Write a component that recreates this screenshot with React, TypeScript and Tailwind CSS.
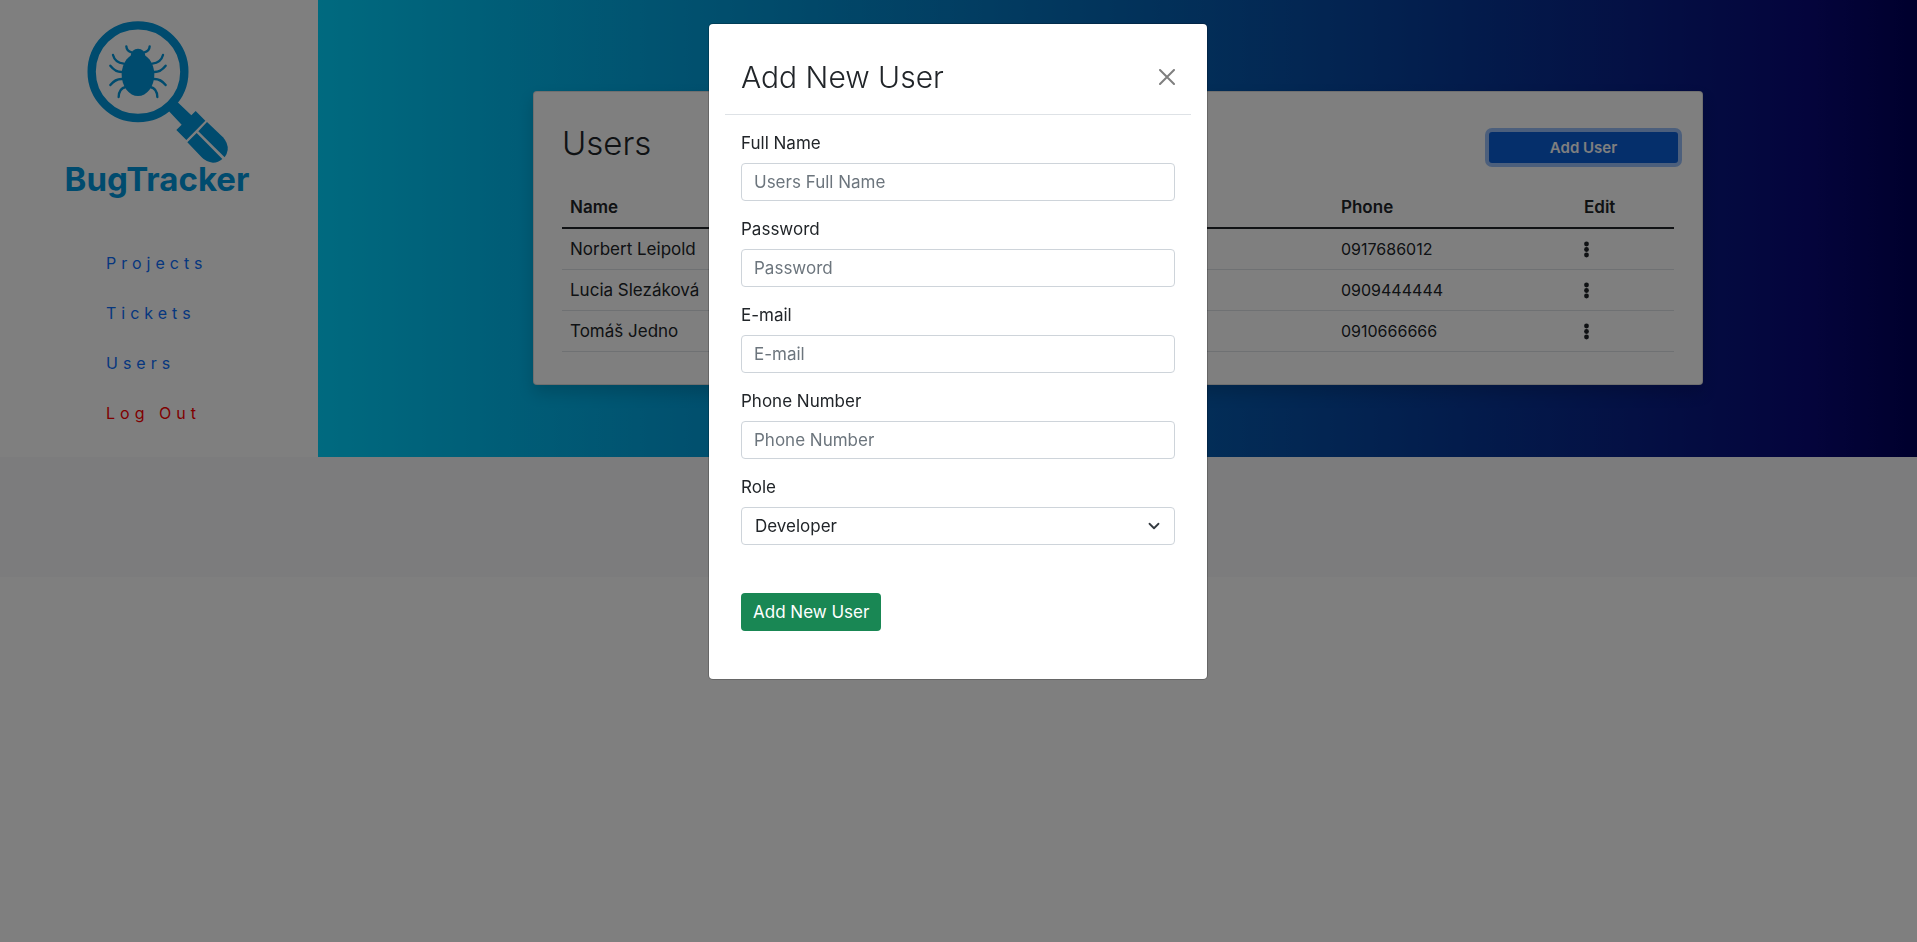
import type { ReactNode } from "react";

const users = [
  { name: "Norbert Leipold", phone: "0917686012" },
  { name: "Lucia Slezáková", phone: "0909444444" },
  { name: "Tomáš Jedno", phone: "0910666666" },
];

const fields = [
  { id: "full-name", label: "Full Name", placeholder: "Users Full Name", type: "text" },
  { id: "password", label: "Password", placeholder: "Password", type: "password" },
  { id: "email", label: "E-mail", placeholder: "E-mail", type: "email" },
  { id: "phone", label: "Phone Number", placeholder: "Phone Number", type: "tel" },
];

function Logo() {
  return (
    <div className="flex flex-col items-center pt-5 pr-0.5 text-[#0096dc]">
      <svg viewBox="100 60 450 432" className="h-36 w-[150px]" aria-hidden="true">
        <circle cx="265" cy="215" r="139" fill="none" stroke="currentColor" strokeWidth="25" />
        <ellipse cx="265" cy="224" rx="49" ry="64" fill="currentColor" />
        <path d="M243 178 V168 A22 22 0 0 1 287 168 V178 Z" fill="currentColor" />
        <g fill="none" stroke="currentColor" strokeWidth="7" strokeLinecap="round">
          <path d="M230 139 Q231 153 246 157" />
          <path d="M300 139 Q299 153 284 157" />
          <path d="M190 165 Q196 188 222 191" />
          <path d="M340 165 Q334 188 308 191" />
          <path d="M182 197 Q197 216 216 216" />
          <path d="M348 197 Q333 216 314 216" />
          <path d="M182 255 Q197 236 218 237" />
          <path d="M348 255 Q333 236 312 237" />
          <path d="M207 291 Q208 265 228 261" />
          <path d="M323 291 Q322 265 302 261" />
        </g>
        <g fill="currentColor">
          <path d="M358 334 L384 307 L425 346 L438 333 L467 362 L410 420 L380 390 L396 374 Z" />
          <path d="M472 366 L520 412 Q536 430 534 450 Q532 463 525 472 L446 394 Z" />
          <path d="M441 399 L518 477 Q506 488 490 488 Q470 487 456 472 L413 427 Z" />
        </g>
      </svg>
      <span className="pr-0.5 text-[33px] leading-[30px] font-bold">BugTracker</span>
    </div>
  );
}

function NavLink({ children, className }: { children: ReactNode; className: string }) {
  return (
    <li>
      <a href="#" className={`text-base leading-6 tracking-[5px] ${className}`}>
        {children}
      </a>
    </li>
  );
}

function Dots() {
  return (
    <svg viewBox="0 0 5 17" className="h-[17px] w-[5px]" fill="currentColor" aria-hidden="true">
      <circle cx="2.5" cy="3" r="2.4" />
      <circle cx="2.5" cy="8.5" r="2.4" />
      <circle cx="2.5" cy="14" r="2.4" />
    </svg>
  );
}

function UsersCard() {
  return (
    <section className="rounded border border-black/[0.125] bg-white px-7 pt-6 pb-8 shadow-[0_8px_16px_rgba(0,0,0,0.15)]">
      <div className="flex items-start justify-between pt-2">
        <h2 className="text-[33px] leading-[38px] font-light">Users</h2>
        <button
          type="button"
          className="-mr-1 mt-2 h-[31px] w-[189px] rounded-[3px] bg-[#0b5ed7] text-[15px] leading-5 font-semibold text-white ring-4 ring-[#98bff8]"
        >
          Add User
        </button>
      </div>
      <table className="mt-6 w-full table-fixed border-collapse text-left">
        <colgroup>
          <col />
          <col className="w-[243px]" />
          <col className="w-[98px]" />
        </colgroup>
        <thead>
          <tr className="border-b-2 border-[#212529]">
            <th className="p-2 text-[17px] leading-6 font-semibold">Name</th>
            <th className="p-2 text-[17px] leading-6 font-semibold">Phone</th>
            <th className="p-2 text-[17px] leading-6 font-semibold">Edit</th>
          </tr>
        </thead>
        <tbody>
          {users.map((user) => (
            <tr key={user.phone} className="border-b border-[#dee2e6]">
              <td className="p-2 text-[17px] leading-6">{user.name}</td>
              <td className="p-2">{user.phone}</td>
              <td className="p-2">
                <button type="button" aria-label={`Edit ${user.name}`} className="flex h-6 items-center">
                  <Dots />
                </button>
              </td>
            </tr>
          ))}
        </tbody>
      </table>
    </section>
  );
}

function AddUserDialog() {
  return (
    <div className="fixed inset-0 overflow-y-auto bg-black/50 pr-px text-[17px] leading-6">
      <div
        role="dialog"
        aria-modal="true"
        aria-labelledby="dialog-title"
        className="mx-auto mt-6 w-full max-w-[498px] rounded bg-white p-4 ring-1 ring-black/20"
      >
        <header className="flex items-center justify-between border-b border-[#dee2e6] px-4 py-5">
          <h1 id="dialog-title" className="text-[30px] leading-[34px] font-light">
            Add New User
          </h1>
          <button type="button" aria-label="Close" className="text-[#7f7f7f]">
            <svg viewBox="0 0 16 16" className="size-4" fill="none" stroke="currentColor" strokeWidth="2" strokeLinecap="round">
              <path d="M1 1 L15 15 M15 1 L1 15" />
            </svg>
          </button>
        </header>
        <form className="flex flex-col gap-4 px-4 pt-4 pb-8">
          {fields.map((field) => (
            <div key={field.id} className="flex flex-col gap-2">
              <label htmlFor={field.id}>{field.label}</label>
              <input
                id={field.id}
                type={field.type}
                placeholder={field.placeholder}
                className="h-[38px] w-full rounded border border-[#ced4da] bg-white px-3 placeholder:text-[#6c757d]"
              />
            </div>
          ))}
          <div className="flex flex-col gap-2">
            <label htmlFor="role">Role</label>
            <div className="grid items-center">
              <select
                id="role"
                className="col-start-1 row-start-1 h-[38px] w-full appearance-none rounded border border-[#ced4da] bg-white px-[13px]"
              >
                <option>Developer</option>
              </select>
              <svg
                viewBox="0 0 16 16"
                className="pointer-events-none col-start-1 row-start-1 mr-[13px] h-3 w-4 justify-self-end"
                fill="none"
                stroke="#343a40"
                strokeWidth="2.4"
                strokeLinecap="round"
                strokeLinejoin="round"
                aria-hidden="true"
              >
                <path d="M2 5 L8 11 L14 5" />
              </svg>
            </div>
          </div>
          <button type="submit" className="mt-8 h-[38px] self-start rounded bg-[#198754] px-3 text-white">
            Add New User
          </button>
        </form>
      </div>
    </div>
  );
}

export default function App() {
  return (
    <div className="min-h-screen bg-white font-['Inter',sans-serif] text-base text-[#212529]">
      <div className="flex">
        <aside className="w-[318px] shrink-0 bg-white">
          <Logo />
          <nav className="pt-[57px] pl-[106px]">
            <ul className="flex flex-col gap-[26px]">
              <NavLink className="text-[#0d6efd]">Projects</NavLink>
              <NavLink className="text-[#0d6efd]">Tickets</NavLink>
              <NavLink className="text-[#0d6efd]">Users</NavLink>
              <NavLink className="text-[#ff0000]">Log Out</NavLink>
            </ul>
          </nav>
        </aside>
        <main className="grow bg-linear-to-r/srgb from-[#00d4ff] via-[#090979] via-93% to-[#00005a] pt-[91px] pr-[214px] pb-[72px] pl-[215px]">
          <UsersCard />
        </main>
      </div>
      <footer className="h-[120px] bg-[#f8f9fa]" />
      <AddUserDialog />
    </div>
  );
}
